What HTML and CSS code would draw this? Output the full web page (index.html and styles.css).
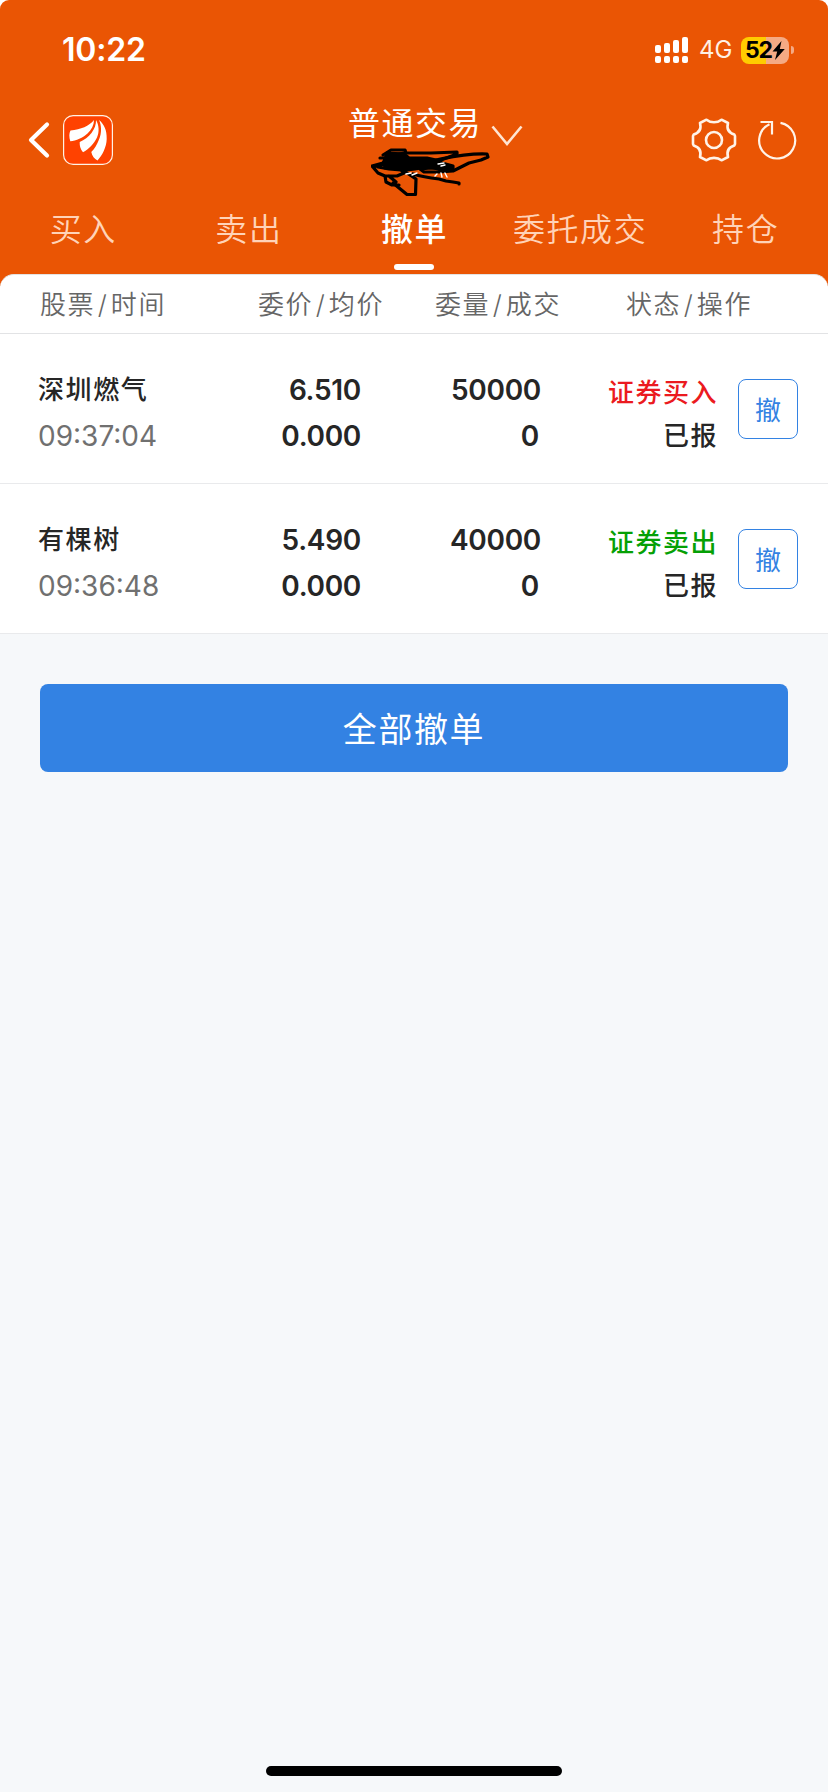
FILE: index.html
```html
<!DOCTYPE html>
<html lang="zh-CN">
<head>
<meta charset="utf-8">
<title>普通交易</title>
<link rel="stylesheet" href="styles.css">
</head>
<body>
<div class="screen">
  <header class="top">
    <div class="status">
      <span class="clock">10:22</span>
      <div class="status-right">
        <svg class="signal" width="34" height="27" viewBox="0 0 34 27" fill="#fff">
          <rect x="0" y="8" width="6" height="8" rx="2"/><rect x="9" y="6" width="6" height="10" rx="2"/><rect x="18" y="3" width="6" height="13" rx="2"/><rect x="27" y="0" width="6" height="16" rx="2"/>
          <rect x="0" y="19" width="6" height="7" rx="2"/><rect x="9" y="19" width="6" height="7" rx="2"/><rect x="18" y="19" width="6" height="7" rx="2"/><rect x="27" y="19" width="6" height="7" rx="2"/>
        </svg>
        <span class="network">4G</span>
        <div class="battery">
          <span class="level">52</span>
          <svg width="13" height="19" viewBox="0 0 13 19"><path d="M9.500 0 .5 10.500H5.200L3 19 12.800 8H7.800Z" fill="#000"/></svg>
        </div>
        <span class="nub"></span>
      </div>
    </div>
    <div class="nav">
      <div class="nav-left">
        <svg width="22" height="38" viewBox="0 0 22 38"><path d="M19 3.500 3 19 19 34.500" fill="none" stroke="#fff" stroke-width="4.200" stroke-linecap="round" stroke-linejoin="round"/></svg>
        <svg class="logo" width="50" height="50" viewBox="0 0 50 50">
          <rect x=".6" y=".6" width="48.800" height="48.800" rx="9.500" fill="#ff4200" stroke="#fff3e6" stroke-width="1.200"/>
          <path fill="#fff" d="M31 5C26 11 18 14.500 7.500 15.500C6 18 6 22 7.300 26.300C13 25.500 20 23 24.500 18.500C28.500 14.500 31 10 31 5Z"/>
          <path fill="#fff" d="M33 5C33.500 14 26 23 16.700 27C16.500 31 17.500 34.500 20 37.300C26 34 31 28.500 34 22.500C36.500 17 36 10 33 5Z"/>
          <path fill="#fff" d="M36 5C38.500 10 39 18 36 24.500C34 29.500 32 33.500 28.300 37C29 41 31.500 44 34.500 45.500C39.500 40 43.500 32 43.700 24C44 15 41 9 36 5Z"/>
        </svg>
      </div>
      <div class="account">
        <span class="title">普通交易</span>
        <svg class="down" width="32" height="22" viewBox="0 0 32 22"><path d="M1.500 1.500 16 19 30.500 1.500" fill="none" stroke="#ffe5d2" stroke-width="2.600"/></svg>
        <svg class="scribble" width="120" height="52" viewBox="0 0 120 52" fill="none" stroke="#000" stroke-width="3.200" stroke-linecap="round" stroke-linejoin="round">
          <path fill="#000" d="M16 8 33 9 38 13 56 13 65 15 71 18 82 21 82 24 70 25 60 22 50 23 44 24 36 25 28 23 14 23 13 17Z"/>
          <path d="M12 10 20 5H34L35 8 18 10M34 8H60L86 7 86 9 70 15 60 19"/>
          <path d="M65 15C80 12 96 8 116 9L117 12 110 15 98 18 90 22 82 26 68 27 53 27 49 24 60 23 75 24"/>
          <path d="M9 13H15L12 18 1 21 7 28 14 31 26 31 33 28 30 25 18 24 7 22M2 22 13 19M14 31 15 37 21 40 28 40M18 31 25 37"/>
          <path d="M22 38 36 49.500H44.500L45 34 36 28 33 26M42 29C52 32 60 33 68 34L75 36 82 37 88 38V39"/>
          <path d="M35 29l5-1M41 30l5-2M67 19l6-1M70 21l4-1M66 29l-2 2M70 28l1 4M74 28l2 4" stroke="#fff" stroke-width="1.400"/>
        </svg>
      </div>
      <div class="nav-right">
        <svg width="46" height="44" viewBox="-23 -22 46 44" fill="none" stroke="#fff3e8" stroke-width="2.600" stroke-linejoin="round">
          <path d="M-7.500-20.300C-3.500-17 3.500-17 7.500-20.300L14-17C12.500-11.500 14-7.500 20.300-5.500L21-4V4L20.300 5.500C14 7.500 12.500 11.500 14 17L7.500 20.300C3.500 17-3.500 17-7.500 20.300L-14 17C-12.500 11.500-14 7.500-20.300 5.500L-21 4V-4L-20.300-5.500C-14-7.500-12.500-11.500-14-17Z"/>
          <circle r="8"/>
        </svg>
        <svg width="40" height="42" viewBox="0 0 40 42" fill="none" stroke="#fff3e8" stroke-width="2.200"><path d="M23.500 3.800A18 18 0 1 1 12.500 5.200M3.500 3H15V15.500" stroke-linejoin="miter"/></svg>
      </div>
    </div>
    <nav class="tabs">
      <a class="tab">买入</a><a class="tab">卖出</a><a class="tab active">撤单</a><a class="tab">委托成交</a><a class="tab">持仓</a>
    </nav>
  </header>
  <main class="panel">
    <div class="heads">
      <span>股票<i>/</i>时间</span><span>委价<i>/</i>均价</span><span>委量<i>/</i>成交</span><span>状态<i>/</i>操作</span>
    </div>
    <div class="row">
      <div class="cell stock"><b>深圳燃气</b><span class="time">09:37:04</span></div>
      <div class="cell price"><b>6.510</b><b>0.000</b></div>
      <div class="cell qty"><b>50000</b><b class="filled">0</b></div>
      <div class="cell state"><b class="buy">证券买入</b><b>已报</b></div>
      <button class="cancel">撤</button>
    </div>
    <div class="row">
      <div class="cell stock"><b>有棵树</b><span class="time">09:36:48</span></div>
      <div class="cell price"><b>5.490</b><b>0.000</b></div>
      <div class="cell qty"><b>40000</b><b class="filled">0</b></div>
      <div class="cell state"><b class="sell">证券卖出</b><b>已报</b></div>
      <button class="cancel">撤</button>
    </div>
  </main>
  <button class="cancel-all">全部撤单</button>
  <div class="home"></div>
</div>
</body>
</html>
```
FILE: styles.css
```css
* { box-sizing: border-box; }
body { margin: 0; background: #fff; }
.screen {
  width: 828px; height: 1792px; display: flex; flex-direction: column;
  background: #f6f8fa; border-radius: 9px 9px 0 0; overflow: hidden;
  font-family: Inter, "Noto Sans CJK SC", sans-serif; color: #262626;
}
.top { height: 286px; flex: none; background: #ea5504; color: #fff; }
.status { height: 100px; display: flex; justify-content: space-between; padding: 30px 34px 0 62px; }
.clock { font-size: 32px; line-height: 40px; font-weight: 600; letter-spacing: -.2px; }
.status-right { display: flex; height: 40px; align-items: center; }
.signal { margin-right: 10px; }
.network { width: 42px; font-size: 24px; line-height: 42px; color: #fff0e4; }
.battery {
  width: 48px; height: 27px; border-radius: 8px; display: flex; align-items: center; justify-content: center;
  background: linear-gradient(90deg, #ffcc00 52%, #f5aa84 52%); color: #000;
}
.level { font-size: 23px; font-weight: 700; letter-spacing: -1px; line-height: 27px; }
.nub { width: 3px; height: 8px; margin-left: 2px; border-radius: 0 4px 4px 0; background: #f5aa84; }
.nav { height: 100px; display: grid; grid-template-columns: 348px 1fr 137px; }
.nav-left { display: flex; align-items: center; height: 80px; padding-left: 28px; gap: 13px; }
.account { position: relative; height: 100px; }
.title { display: block; font-size: 32px; letter-spacing: 1.5px; line-height: 48px; }
.down { position: absolute; left: 143px; top: 25px; }
.scribble { position: absolute; left: 23px; top: 45px; }
.nav-right { display: flex; align-items: center; height: 80px; gap: 20px; }
.tabs { height: 74px; display: grid; grid-template-columns: repeat(5, 1fr); text-align: center; }
.tab { display: flex; flex-direction: column; align-items: center; font-size: 32px; line-height: 60px; letter-spacing: 1.6px; color: #ffd3b8; font-weight: 350; text-indent: 1px; }
.active { color: #fff; font-weight: 500; }
.active::after { content: ""; width: 40px; height: 6px; border-radius: 3px; margin-top: 4px; background: #fff; }
.panel { flex: none; margin-top: -12px; background: #fff; border-top: 1px solid #e3e3e3; border-radius: 14px 14px 0 0; }
.heads {
  height: 59px; display: grid; grid-template-columns: 218px 177px 191px 1fr; padding-left: 40px;
  border-bottom: 1px solid #e2e3e5; font-size: 26px; line-height: 60px; letter-spacing: 1.6px; color: #666; font-weight: 350; white-space: nowrap;
}
.heads i { font-style: normal; margin: 0 2.5px; }
.row { display: grid; grid-template-columns: 182px 141px 180px 177px 80px; padding-left: 38px; height: 150px; border-bottom: 1px solid #e9eaec; }
.cell { display: flex; flex-direction: column; padding-top: 33px; font-size: 28px; line-height: 46px; letter-spacing: -.3px; }
.cell b { font-weight: 600; }
.stock b { font-size: 26px; letter-spacing: 1.6px; font-weight: 500; }
.time { color: #707070; letter-spacing: 0; }
.price, .qty, .state { align-items: flex-end; }
.filled { margin-right: 2px; }
.state { font-size: 26px; letter-spacing: 1.5px; padding-top: 37px; line-height: 43px; }
.state b { font-weight: 500; }
.state .buy { color: #eb1a20; }
.state .sell { color: #05a005; }
.cancel {
  justify-self: end; width: 60px; height: 60px; margin-top: 45px; padding: 0; background: #fff;
  border: 1px solid #3382e3; border-radius: 8px; font: 26px/56px "Noto Sans CJK SC", sans-serif; color: #3382e3;
}
.cancel-all {
  flex: none; width: 748px; height: 88px; margin: 50px 0 0 40px; padding: 0; border: 0; border-radius: 8px;
  background: #3382e3; color: #fff; font: 34px/86px "Noto Sans CJK SC", sans-serif; letter-spacing: 1.6px;
}
.home { width: 296px; height: 10px; border-radius: 5px; background: #000; margin: auto auto 16px; }
```
